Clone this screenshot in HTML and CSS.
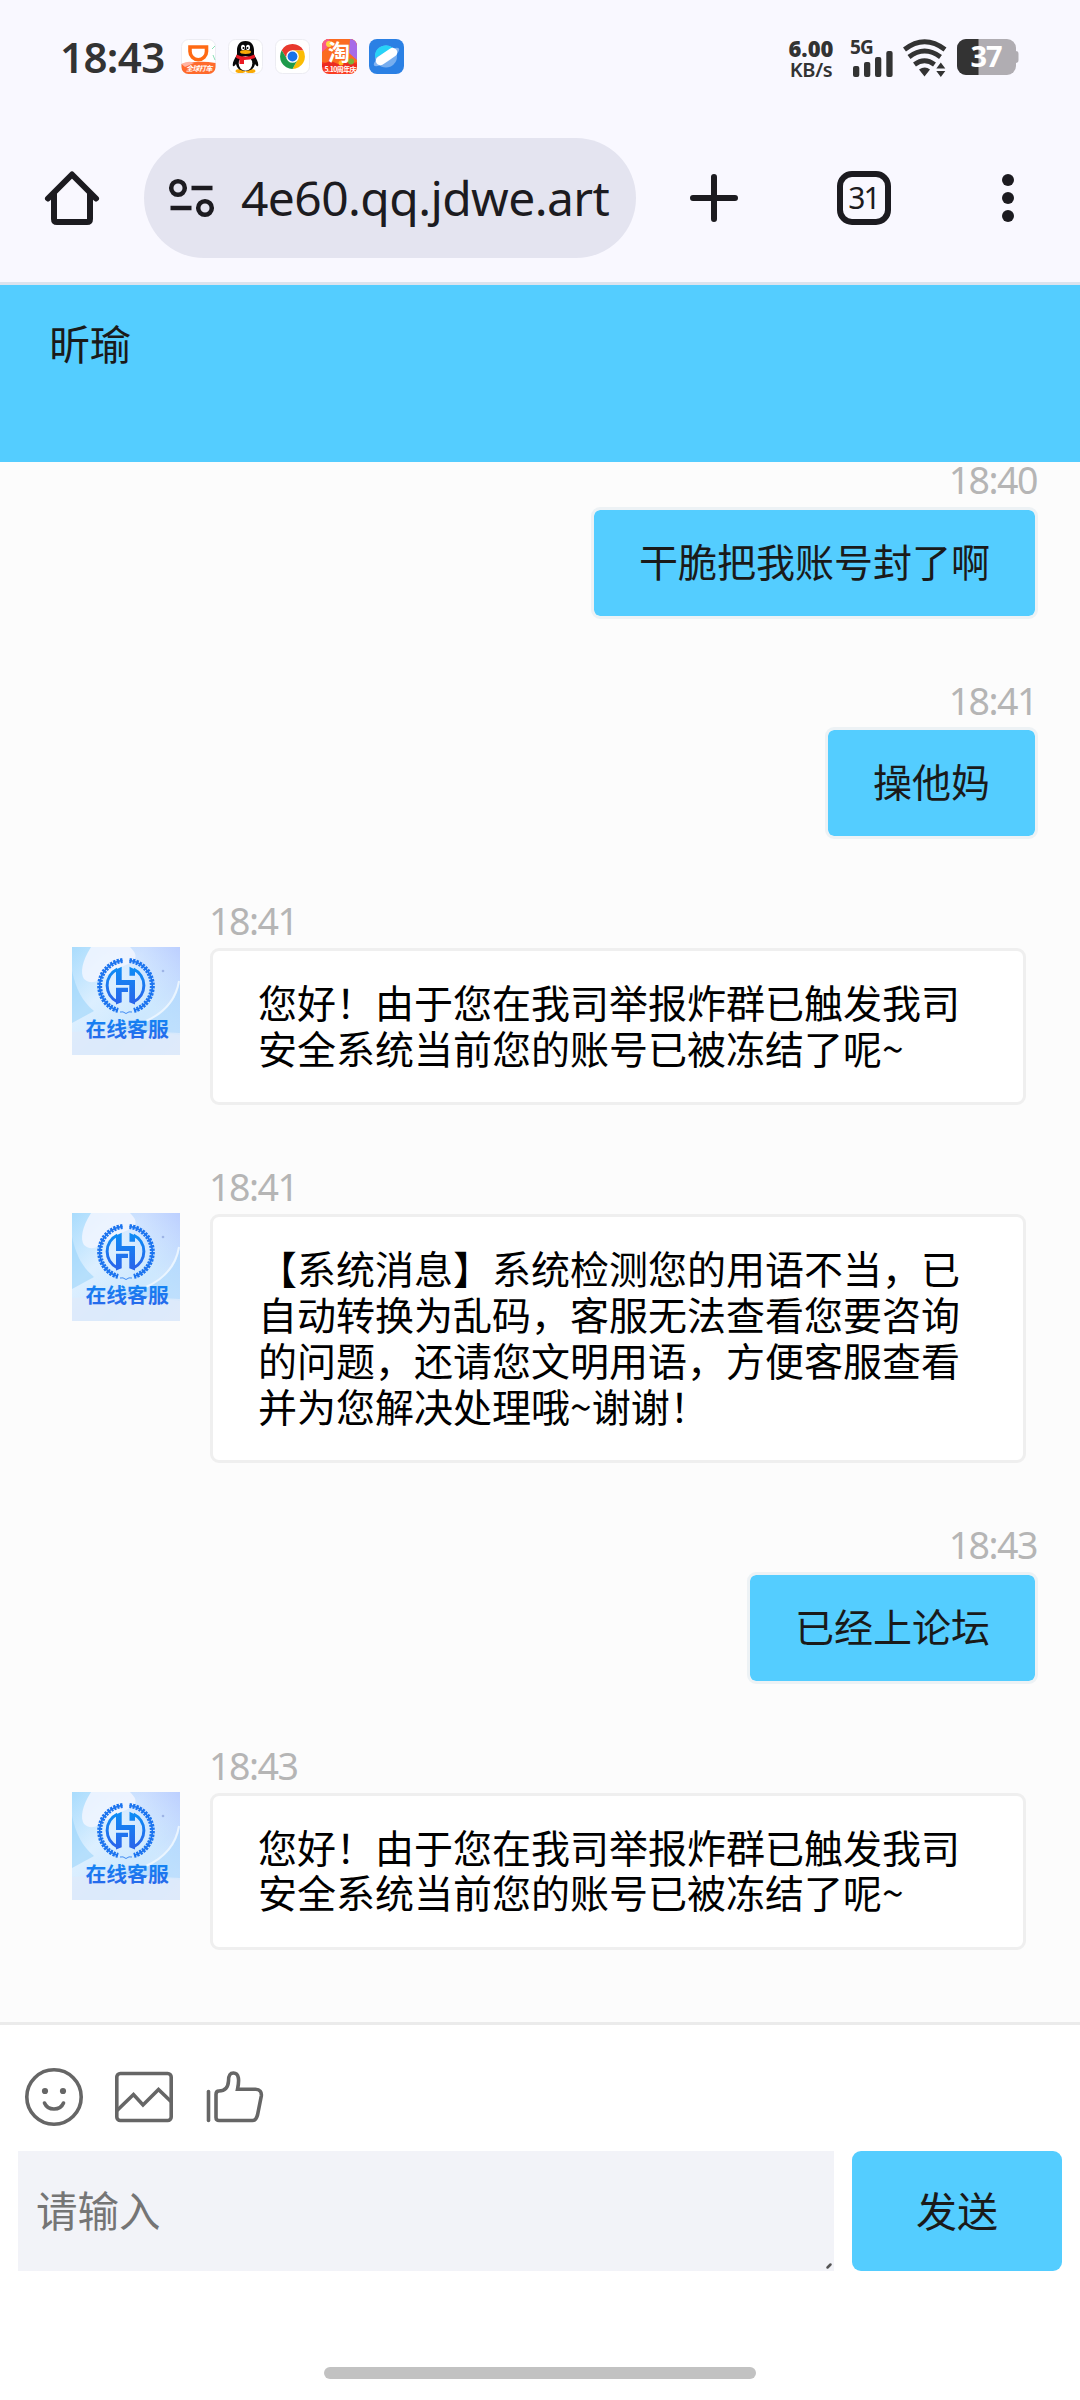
FILE: index.html
```html
<!DOCTYPE html>
<html lang="zh-CN">
<head>
<meta charset="utf-8">
<title>在线客服</title>
<link rel="stylesheet" href="styles.css">
</head>
<body>
<svg class="defs" width="0" height="0">
  <defs>
    <linearGradient id="sky" x1="0" y1="0" x2="1" y2="1">
      <stop offset="0" stop-color="#a9dcfd"/><stop offset=".35" stop-color="#dcefff"/><stop offset=".65" stop-color="#cde8fe"/><stop offset="1" stop-color="#dce9fb"/>
    </linearGradient>
    <linearGradient id="corner" x1="0" y1="1" x2="1" y2="0">
      <stop offset=".6" stop-color="#c4d8ff" stop-opacity="0"/><stop offset="1" stop-color="#bccfff"/>
    </linearGradient>
    <linearGradient id="mark" x1="0" y1="0" x2="0" y2="1">
      <stop offset="0" stop-color="#0d8df5"/><stop offset="1" stop-color="#2a63ea"/>
    </linearGradient>
    <symbol id="agent" viewBox="0 0 108 108">
      <rect width="108" height="108" fill="url(#sky)"/>
      <rect width="108" height="108" fill="url(#corner)"/>
      <path d="M19 0C10 14 8 26 12 32c12 10 20-6 42-14C70 12 62 4 58 0Z" fill="#f2f6ff" opacity=".85"/>
      <path d="M0 24c4 18 10 30 22 40L0 76Z" fill="#8fd0fa" opacity=".5"/>
      <path d="M108 36C103 60 84 76 40 82l68 4Z" fill="#a5d6fd" opacity=".5"/>
      <path d="M107 34C104 52 92 66 74 74" fill="none" stroke="#eaf5ff" stroke-width="2"/>
      <path d="M0 85Q50 80 108 88V108H0Z" fill="#dfeafa" opacity=".8"/>
      <g fill="none" stroke="#1c74ef">
        <path d="M50.500 13.500A25.600 25.600 0 0 0 46 63.500" stroke-width="5" stroke-dasharray="2.300 1.100"/>
        <path d="M57.500 13.500A25.600 25.600 0 0 1 62 63.500" stroke-width="5" stroke-dasharray="2.300 1.100"/>
        <path d="M50.500 13.500A25.600 25.600 0 0 0 46 63.500M57.500 13.500A25.600 25.600 0 0 1 62 63.500" stroke-width="1.600"/>
        <path d="M48 65q3-1 6 1.500q3-2.500 6-1.500" stroke-width=".8"/>
      </g>
      <path d="M45.500 22.200A18 18 0 0 0 45.500 54.800M61.500 22.200A18 18 0 0 1 61.500 54.800" fill="none" stroke="url(#mark)" stroke-width="3"/>
      <path d="M44 22.500l5.700-2.700V33H63v24.500l-5.700-2.200V38H44ZM57.500 19.800L63 22.500v6.200h-5.500ZM44 40.800h12v4.200h-6.300v10.300L44 57.500Z" fill="url(#mark)"/>
      <circle cx="91" cy="24" r="1.300" fill="#9eb4e6"/>
      <text x="13.500" y="90" class="agent-text">在线客服</text>
    </symbol>
  </defs>
</svg>

<header class="status">
  <div class="clock">18:43</div>
  <div class="apps">
    <svg viewBox="0 0 35 35"><rect x=".5" y=".5" width="34" height="34" rx="7" fill="#fff" stroke="#ececf2"/><path d="M.5 25Q18 21 34.500 24V28a7 7 0 0 1-7 7h-20a7 7 0 0 1-7-7Z" fill="#ff6a2c"/><path d="M.5 25Q8 21 13 24L4 28Z" fill="#ffb3a2"/><path d="M9 8H25.500V12.500a8.200 8.200 0 0 1-16.500 0Z" fill="none" stroke="#ff6a13" stroke-width="3.600"/><path d="M31 10l3-3M32 16l2 5" stroke="#8cdfb7" stroke-width="1"/><text x="5" y="32" class="app-label slanted">全球打车</text></svg>
    <svg viewBox="0 0 35 35"><rect x=".5" y=".5" width="34" height="34" rx="7" fill="#fff" stroke="#ececf2"/><ellipse cx="12.500" cy="32" rx="5" ry="2" fill="#faab07"/><ellipse cx="22.500" cy="32" rx="5" ry="2" fill="#faab07"/><path d="M17.500 2C11 2 9 7 9 11v5C6 20 4 25 5 27c1 1 2-1 3-2 1 5 5 7 9.500 7s8.500-2 9.500-7c1 1 2 3 3 2 1-2-1-7-4-11v-5c0-4-2-9-8.500-9Z" fill="#080808"/><ellipse cx="17.500" cy="24.500" rx="6.800" ry="7.300" fill="#fff"/><ellipse cx="15" cy="8.500" rx="2" ry="2.800" fill="#fff"/><ellipse cx="20" cy="8.500" rx="2" ry="2.800" fill="#fff"/><circle cx="15.500" cy="9" r="1"/><circle cx="19.500" cy="9" r="1"/><ellipse cx="17.500" cy="13" rx="5.500" ry="1.900" fill="#faab07"/><path d="M8.500 15.500Q17.500 20 26.500 15.500L27 19Q22 21 16 21v4h-4.500v-5Q9 19.500 8 18.500Z" fill="#eb1923"/></svg>
    <svg viewBox="0 0 35 35"><rect x=".5" y=".5" width="34" height="34" rx="7" fill="#fff" stroke="#ececf2"/><path d="M17.500 11.500H28.400A12.500 12.500 0 0 0 6.700 11.300L12.300 20.500Z" fill="#e8392c"/><path d="M22.700 20.500L17.500 30A12.500 12.500 0 0 0 28.400 11.500H17.500Z" fill="#fbbc04"/><path d="M12.300 20.500L6.700 11.300A12.500 12.500 0 0 0 17.500 30l5.200-9.500Z" fill="#1e9a4b"/><circle cx="17.500" cy="17.500" r="6.300" fill="#fff"/><circle cx="17.500" cy="17.500" r="4.900" fill="#1a73e8"/></svg>
    <svg viewBox="0 0 35 35"><rect width="35" height="35" rx="7" fill="#fb3d22"/><path d="M7 0h21a7 7 0 0 1 7 7v16Q17 28 0 23V7a7 7 0 0 1 7-7Z" fill="#fb6b21"/><path d="M28 0a7 7 0 0 1 7 7v14L27 14Z" fill="#a66be8"/><path d="M0 7a7 7 0 0 1 7-7l2 5-9 8Z" fill="#f8588d"/><circle cx="7" cy="5" r="3" fill="#ffd43c"/><path d="M0 25L9 22l7 3 6-3 13 3v3H0Z" fill="#eb2b21"/><circle cx="19" cy="24" r="2.500" fill="#ffbf23"/><circle cx="29" cy="22.500" r="3" fill="#7bb13a"/><text x="6" y="20.500" class="tao">淘</text><text x="2.500" y="32.500" class="app-label">5.10周年庆</text></svg>
    <svg viewBox="0 0 35 35"><rect width="35" height="35" rx="8" fill="#2b80e4"/><circle cx="17" cy="17.500" r="11" fill="#77aeef"/><path d="M6 19A11 11 0 0 1 24 9Z" fill="#27d3f7"/><ellipse cx="17.500" cy="18" rx="15" ry="4.500" transform="rotate(-34 17.500 18)" fill="#a9cbf6" opacity=".7"/><rect x="5.500" y="13" width="24" height="9" rx="4.500" transform="rotate(-34 17.500 17.500)" fill="#fff"/></svg>
  </div>
  <div class="speed"><b>6.00</b><span>KB/s</span></div>
  <svg class="signal" viewBox="0 0 46 38"><text x="0" y="15" class="net">5G</text><g fill="#333"><rect x="3" y="27" width="6.300" height="11" rx="2"/><rect x="14" y="23" width="6.300" height="15" rx="2"/><rect x="25" y="18" width="6.300" height="20" rx="2"/><rect x="36.300" y="12" width="6.300" height="26" rx="2"/></g></svg>
  <svg class="wifi" viewBox="0 0 44 38"><g fill="none" stroke="#333" stroke-width="4.800"><path d="M1.500 10.500Q21.500-5 42 10.500"/><path d="M6 18Q21.500 6 37.500 18"/><path d="M11.500 25.500Q21.500 18 31.500 25.500"/></g><path d="M16 30.500q6-4 11 0l-5.500 7ZM37.800 23.500l4.500 6h-9ZM37.800 38l-4.500-6h9Z" fill="#333"/></svg>
  <svg class="battery" viewBox="0 0 64 36"><path d="M58 12h1.500a3 3 0 0 1 3 3v6a3 3 0 0 1-3 3H58Z" fill="#b0adb2"/><rect x="1" width="59" height="36" rx="9" fill="#b0adb2"/><path d="M22.500 0V36H10a9 9 0 0 1-9-9V9a9 9 0 0 1 9-9Z" fill="#333"/><text x="30" y="28" text-anchor="middle" class="charge">37</text></svg>
</header>

<nav class="toolbar">
  <svg class="home" viewBox="0 0 54 54"><path d="M3 27.500L27 3.500 51 27.500M9 22V48q0 3 3 3H42q3 0 3-3V22" fill="none" stroke="#1c1b20" stroke-width="6" stroke-linecap="round" stroke-linejoin="round"/></svg>
  <div class="address">
    <svg class="tune" viewBox="0 0 46 38"><g fill="none" stroke="#1c1b20"><circle cx="9" cy="9" r="6.800" stroke-width="4.500"/><circle cx="36" cy="29" r="6.800" stroke-width="4.500"/><path d="M22.500 9H43.500M1.500 29H22.500" stroke-width="4.500"/></g></svg>
    <span class="url">4e60.qq.jdwe.art</span>
  </div>
  <svg class="plus" viewBox="0 0 48 48"><path d="M3 24H45M24 3V45" stroke="#1c1b20" stroke-width="6" stroke-linecap="round"/></svg>
  <div class="tabs">31</div>
  <svg class="more" viewBox="0 0 12 48"><g fill="#1c1b20"><circle cx="6" cy="6" r="6"/><circle cx="6" cy="24" r="6"/><circle cx="6" cy="42" r="6"/></g></svg>
</nav>

<div class="title">昕瑜</div>

<main class="chat">
  <div class="list">
    <div class="out"><time>18:40</time><p class="bubble">干脆把我账号封了啊</p></div>
    <div class="out"><time>18:41</time><p class="bubble">操他妈</p></div>
    <div class="in"><time>18:41</time><svg class="avatar"><use href="#agent"/></svg><p class="bubble">您好！由于您在我司举报炸群已触发我司<br>安全系统当前您的账号已被冻结了呢~</p></div>
    <div class="in"><time>18:41</time><svg class="avatar"><use href="#agent"/></svg><p class="bubble">【系统消息】系统检测您的用语不当，已<br>自动转换为乱码，客服无法查看您要咨询<br>的问题，还请您文明用语，方便客服查看<br>并为您解决处理哦~谢谢！</p></div>
    <div class="out"><time>18:43</time><p class="bubble">已经上论坛</p></div>
    <div class="in"><time>18:43</time><svg class="avatar"><use href="#agent"/></svg><p class="bubble">您好！由于您在我司举报炸群已触发我司<br>安全系统当前您的账号已被冻结了呢~</p></div>
  </div>
</main>

<footer class="composer">
  <div class="tools">
    <svg viewBox="0 0 60 60"><circle cx="30" cy="30" r="27.200"/><path d="M20.500 36Q23 42 30 42T39.500 36" stroke-linecap="round"/><g class="solid"><circle cx="21" cy="24" r="3.100"/><circle cx="39" cy="24" r="3.100"/></g></svg>
    <svg viewBox="0 0 60 60"><rect x="2.800" y="6.500" width="54.400" height="47" rx="3.500"/><path d="M3 43.500L19.500 27.500 29 38 44.500 22.500 57 34.500"/></svg>
    <svg viewBox="0 0 60 60"><path d="M4.500 24.500V53.500" stroke-linecap="round"/><path d="M12 27.500Q12 24 15 24C20 24 24 22 24.500 14 24.500 8 26 6 29.500 6 35 6 35.500 13 33.500 22.300H51.500Q58 22.500 57.300 29L53.500 48Q52 53.500 48.500 53.500H15Q12 53.500 12 50.500Z"/></svg>
  </div>
  <div class="entry">
    <div class="input"><span>请输入</span><svg class="grip" viewBox="0 0 6 6"><path d="M1.500 4.500L4.500 1.500" stroke="#555" stroke-width="2.500" stroke-linecap="round"/></svg></div>
    <button class="send">发送</button>
  </div>
  <div class="gesture"></div>
</footer>
</body>
</html>
```
FILE: styles.css
```css
* { box-sizing: border-box; margin: 0; }
body { width: 1080px; height: 2400px; overflow: hidden; display: flex; flex-direction: column; background: #fff; font-family: "Noto Sans CJK SC", sans-serif; color: #1a1a1a; }
svg { display: block; flex: none; overflow: visible; }
.defs { position: absolute; }

.status { height: 114px; flex: none; display: flex; align-items: flex-start; padding: 39px 60px 0 60px; background: #f9f8ff; color: #333; font-family: "Noto Sans", sans-serif; }
.clock { width: 121px; font-size: 42px; font-weight: 600; line-height: 36px; letter-spacing: -0.6px; white-space: nowrap; }
.apps { display: flex; gap: 12px; }
.apps svg { width: 35px; height: 35px; }
.app-label { font: 700 7px "Noto Sans CJK SC", sans-serif; fill: #fff; letter-spacing: -0.6px; }
.slanted { font-style: italic; letter-spacing: -0.5px; }
.tao { font: 700 22px "Noto Sans CJK SC", sans-serif; fill: #fff; }
.speed { display: flex; flex-direction: column; align-items: center; width: 48px; margin-left: 383px; line-height: 21px; margin-top: -1px; font-size: 20px; font-weight: 700; }
.speed b { font-size: 22px; letter-spacing: 0; }
.speed span { font-size: 20px; font-weight: 600; letter-spacing: -0.4px; }
.signal { width: 46px; height: 38px; margin-left: 15px; margin-right: 7px; }
.net { font: 700 19px "Noto Sans", sans-serif; fill: #333; letter-spacing: -0.8px; }
.wifi { width: 44px; height: 38px; margin-right: 9px; }
.battery { width: 64px; height: 36px; }
.charge { font: 700 29px "Noto Sans", sans-serif; fill: #fff; letter-spacing: -1px; }

.toolbar { height: 171px; flex: none; display: flex; align-items: center; padding: 0 66px 0 45px; background: #f9f8ff; border-bottom: 3px solid #dce3ee; }
.home { width: 54px; height: 54px; margin-right: 45px; }
.address { width: 492px; height: 120px; flex: none; display: flex; align-items: center; padding-left: 25px; border-radius: 60px; background: #e4e4f0; }
.tune { width: 46px; height: 38px; margin-right: 26px; }
.url { font: 400 48px/60px "Noto Sans", sans-serif; color: #1c1b20; letter-spacing: -0.6px; white-space: nowrap; }
.plus { width: 48px; height: 48px; margin-left: 54px; }
.tabs { width: 54px; height: 54px; flex: none; margin-left: 99px; border: 6px solid #1c1b20; border-radius: 15px; font: 400 30px/42px "Noto Sans", sans-serif; letter-spacing: -2px; text-align: center; text-indent: -1px; color: #1c1b20; }
.more { width: 12px; height: 48px; margin-left: 111px; }

.title { height: 177px; flex: none; padding: 27px 49px; background: #54cdff; font-size: 41px; line-height: 60px; }

.chat { height: 1560px; flex: none; overflow: hidden; background: #fcfcfc; }
.list { display: flex; flex-direction: column; gap: 59px; margin-top: -5px; padding: 0 42px 0 72px; }
time { font: 400 37.500px/45.700px "Noto Sans", sans-serif; letter-spacing: -1.500px; color: #b5b5b5; }
.out { display: flex; flex-direction: column; align-items: flex-end; gap: 4px; }
.in { display: grid; grid-template-columns: 108px 816px; column-gap: 30px; row-gap: 4px; }
.in time { grid-column: 2; margin-left: -1px; }
.avatar { width: 108px; height: 108px; margin-top: -1px; }
.agent-text { font: 700 20.800px "Noto Sans CJK SC", sans-serif; fill: url(#mark); }
.bubble { padding: 28px 45px 32px; border: 3px solid #efefef; border-radius: 9px; background: #fff; color: #000; font-size: 39px; line-height: 45.820px; white-space: nowrap; text-spacing-trim: space-all; }
.out time { margin-right: 1px; }
.out .bubble { background: #54cdff; background-clip: padding-box; border-color: #edf2f5; color: #1a1a1a; }

.composer { flex: 1; display: flex; flex-direction: column; padding: 42px 18px 0; border-top: 3px solid #ebebeb; background: #fff; }
.tools { display: flex; gap: 30px; padding-left: 6px; height: 84px; }
.tools svg { width: 60px; height: 60px; fill: none; stroke: #666; stroke-width: 3.600; }
.tools .solid { fill: #666; stroke: none; }
.entry { display: flex; gap: 18px; height: 120px; }
.input { position: relative; width: 816px; padding-left: 18px; background: #f2f3f8; color: #757575; font-size: 41.500px; line-height: 116px; }
.grip { position: absolute; right: 2px; bottom: 2px; width: 6px; height: 6px; }
.send { width: 210px; padding: 0 0 4px; border: 0; border-radius: 9px; background: #54cdff; color: #1a1a1a; font: 400 41px/116px "Noto Sans CJK SC", sans-serif; }
.gesture { width: 432px; height: 12px; margin: 96px auto 0; border-radius: 6px; background: #c2c2c2; }
```
